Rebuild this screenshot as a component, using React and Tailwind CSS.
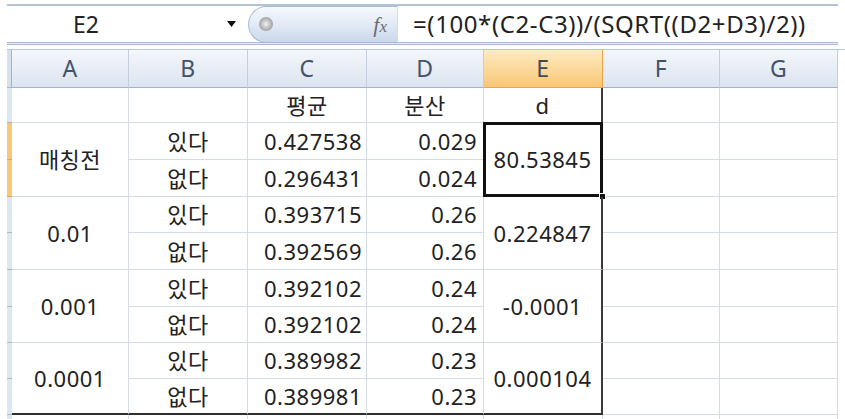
import React from "react";

const groups = [
  { a: "매칭전", c: ["0.427538", "0.296431"], d: ["0.029", "0.024"], e: "80.53845", sel: true },
  { a: "0.01", c: ["0.393715", "0.392569"], d: ["0.26", "0.26"], e: "0.224847" },
  { a: "0.001", c: ["0.392102", "0.392102"], d: ["0.24", "0.24"], e: "-0.0001" },
  { a: "0.0001", c: ["0.389982", "0.389981"], d: ["0.23", "0.23"], e: "0.000104" },
];

const grid = "border-r border-b border-[#d5dbe5]";

function ColHead({ label, active }) {
  return (
    <div
      className={
        active
          ? "flex items-center justify-center border-r border-b border-[#f0a44a] bg-gradient-to-b from-[#fdecc0] to-[#f8c674] text-[23px] text-[#3d4a5a]"
          : "flex items-center justify-center border-r border-b border-r-[#c3cfde] border-b-[#9eb4cc] bg-gradient-to-b from-[#f4f7fb] to-[#dbe4ef] text-[23px] text-[#43536a]"
      }
    >
      {label}
    </div>
  );
}

function RowHead({ active }) {
  return (
    <div
      className={
        active
          ? "border-b border-b-[#e7a24c] bg-[#f9c77a]"
          : "border-b border-b-[#a7b6c9] bg-[#dde7f3]"
      }
    />
  );
}

export default function App() {
  return (
    <div
      className="w-[845px] h-[419px] overflow-hidden bg-white text-[22px] text-[#222]"
      style={{ fontFamily: '"Noto Sans", "Noto Sans CJK KR", sans-serif' }}
    >
      <div className="pl-[7px] pt-[4px] w-[845px]">
        {/* top rule */}
        <div className="w-[831px] h-[2px] bg-[#b3c2d5]" />

        {/* Formula bar */}
        <div className="flex h-[36px] w-[831px] items-center">
          <div className="flex w-[241px] h-full items-center">
            <div className="w-[158px] text-center text-[23px] leading-none text-[#222]">E2</div>
            <svg className="ml-[62px]" width="9" height="6" viewBox="0 0 9 6">
              <polygon points="0,0 9,0 4.5,6" fill="#111" />
            </svg>
          </div>
          <div className="relative flex h-[37px] w-[149px] items-center rounded-l-full border border-r-0 border-[#a9bbd2] bg-gradient-to-b from-[#f6f9fd] via-[#e2eaf5] to-[#cad8ea]">
            <div className="ml-[10px] h-[14px] w-[14px] rounded-full bg-radial from-[#f4f4f4] via-[#b8b8b8] to-[#8a8a8a]" />
            <span
              className="ml-auto mr-[10px] text-[22px] italic text-[#6c6c6c]"
              style={{ fontFamily: '"Liberation Serif", serif' }}
            >
              f<span className="text-[17px]">x</span>
            </span>
          </div>
          <div className="h-full w-px bg-[#d4dce7]" />
          <div className="pl-[15px] text-[24px] tracking-[0.6px] leading-none whitespace-nowrap">
            =(100*(C2-C3))/(SQRT((D2+D3)/2))
          </div>
        </div>

        {/* double rule */}
        <div className="w-[831px] h-[3px] border-y border-[#a9bbd2] bg-[#e3ebf5]" />
        <div className="h-[4px]" />

        {/* Sheet grid */}
        <div className="grid grid-cols-[5px_117px_119px_119px_117px_119px_117px_118px] grid-rows-[38px_35px_37px_37px_36px_37px_37px_36px_36px_36px_6px] border-t border-[#b7c6d8] tracking-[0.5px]">
          <div className="border-b border-r border-b-[#9eb4cc] border-r-[#9eb4cc] bg-[#d6e1ee]" />
          <ColHead label="A" />
          <ColHead label="B" />
          <ColHead label="C" />
          <ColHead label="D" />
          <ColHead label="E" active />
          <ColHead label="F" />
          <ColHead label="G" />

          {/* row 1 */}
          <RowHead />
          <div className={grid} />
          <div className={grid} />
          <div className={`${grid} flex items-center justify-center`}>평균</div>
          <div className={`${grid} flex items-center justify-center`}>분산</div>
          <div className="border-b border-[#d5dbe5] border-r-2 border-r-[#3b3b3b] flex items-center justify-center">d</div>
          <div className={grid} />
          <div className={grid} />

          {groups.map((g, gi) => {
            const last = gi === groups.length - 1;
            const bb = last ? "border-b-2 border-b-[#2e2e2e]" : "border-b border-b-[#d5dbe5]";
            return (
              <React.Fragment key={gi}>
                <RowHead active={g.sel} />
                <div className={`row-span-2 border-r border-r-[#d5dbe5] ${bb} flex items-center justify-center`}>
                  {g.a}
                </div>
                <div className={`${grid} flex items-center justify-center`}>있다</div>
                <div className={`${grid} flex items-center justify-end pr-[4px]`}>{g.c[0]}</div>
                <div className={`${grid} flex items-center justify-end pr-[6px]`}>{g.d[0]}</div>
                <div className={`relative row-span-2 border-r-2 border-r-[#3b3b3b] ${bb} flex items-center justify-center`}>
                  {g.e}
                  {g.sel && (
                    <>
                      <div className="absolute left-[-1px] top-[-1px] right-[-2px] bottom-[-1px] border-[3px] border-[#111]" />
                      <div className="absolute right-[-5px] bottom-[-4px] h-[7px] w-[7px] bg-[#111] border border-white" />
                    </>
                  )}
                </div>
                <div className={grid} />
                <div className={grid} />

                <RowHead active={g.sel} />
                <div className={`border-r border-r-[#d5dbe5] ${bb} flex items-center justify-center`}>없다</div>
                <div className={`border-r border-r-[#d5dbe5] ${bb} flex items-center justify-end pr-[4px]`}>{g.c[1]}</div>
                <div className={`border-r border-r-[#d5dbe5] ${bb} flex items-center justify-end pr-[6px]`}>{g.d[1]}</div>
                <div className={grid} />
                <div className={grid} />
              </React.Fragment>
            );
          })}

          {/* partial row 11 */}
          <RowHead />
          <div className={grid} />
          <div className={grid} />
          <div className={grid} />
          <div className={grid} />
          <div className={grid} />
          <div className={grid} />
          <div className={grid} />
        </div>
      </div>
    </div>
  );
}
